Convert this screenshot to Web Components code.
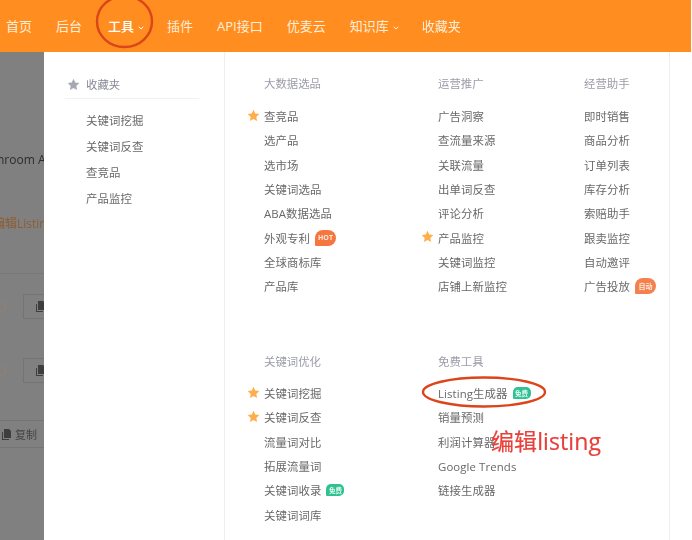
<!DOCTYPE html>
<html lang="zh">
<head>
<meta charset="utf-8">
<title>工具菜单</title>
<style>
  html, body { margin: 0; height: 100%; background: #fff; overflow: hidden; }
  body { font-family: "Open Sans", "Noto Sans CJK SC", sans-serif; }
</style>
</head>
<body>
<app-shell>
  <app-nav slot="nav">
    <nav-item>首页</nav-item>
    <nav-item>后台</nav-item>
    <nav-item active caret>工具</nav-item>
    <nav-item>插件</nav-item>
    <nav-item>API接口</nav-item>
    <nav-item>优麦云</nav-item>
    <nav-item caret>知识库</nav-item>
    <nav-item>收藏夹</nav-item>
  </app-nav>
  <dim-page slot="page"></dim-page>
  <fav-menu slot="side">
    <menu-link>关键词挖掘</menu-link>
    <menu-link>关键词反查</menu-link>
    <menu-link>查竞品</menu-link>
    <menu-link>产品监控</menu-link>
  </fav-menu>
  <tool-grid slot="main">
    <menu-group title="大数据选品" style="--w:174px;--gap:11px">
      <menu-link star>查竞品</menu-link>
      <menu-link>选产品</menu-link>
      <menu-link>选市场</menu-link>
      <menu-link>关键词选品</menu-link>
      <menu-link>ABA数据选品</menu-link>
      <menu-link badge="hot">外观专利</menu-link>
      <menu-link>全球商标库</menu-link>
      <menu-link>产品库</menu-link>
    </menu-group>
    <menu-group title="运营推广" style="--w:146px;--gap:11px">
      <menu-link>广告洞察</menu-link>
      <menu-link>查流量来源</menu-link>
      <menu-link>关联流量</menu-link>
      <menu-link>出单词反查</menu-link>
      <menu-link>评论分析</menu-link>
      <menu-link star>产品监控</menu-link>
      <menu-link>关键词监控</menu-link>
      <menu-link>店铺上新监控</menu-link>
    </menu-group>
    <menu-group title="经营助手" style="--w:84px;--gap:11px">
      <menu-link>即时销售</menu-link>
      <menu-link>商品分析</menu-link>
      <menu-link>订单列表</menu-link>
      <menu-link>库存分析</menu-link>
      <menu-link>索赔助手</menu-link>
      <menu-link>跟卖监控</menu-link>
      <menu-link>自动邀评</menu-link>
      <menu-link badge="auto">广告投放</menu-link>
    </menu-group>
    <menu-group title="关键词优化" style="--w:174px">
      <menu-link star>关键词挖掘</menu-link>
      <menu-link star>关键词反查</menu-link>
      <menu-link>流量词对比</menu-link>
      <menu-link>拓展流量词</menu-link>
      <menu-link badge="free">关键词收录</menu-link>
      <menu-link>关键词词库</menu-link>
    </menu-group>
    <menu-group title="免费工具" style="--w:146px">
      <menu-link badge="free">Listing生成器</menu-link>
      <menu-link>销量预测</menu-link>
      <menu-link>利润计算器</menu-link>
      <menu-link>Google Trends</menu-link>
      <menu-link>链接生成器</menu-link>
    </menu-group>
  </tool-grid>
  <red-notes slot="notes"></red-notes>
</app-shell>

<script>
const STAR = `<svg viewBox="0 0 24 24" width="13" height="13"><path fill="currentColor" d="M12 1.6l3.2 6.9 7.5.9-5.5 5.2 1.4 7.5L12 18.5l-6.6 3.6 1.4-7.5L1.3 9.4l7.5-.9z"/></svg>`;

class AppShell extends HTMLElement {
  constructor() {
    super();
    this.attachShadow({ mode: "open" }).innerHTML = `
    <style>
      :host { display: block; position: relative; width: 692px; height: 540px; overflow: hidden; filter: blur(.45px); }
      .body { display: flex; height: 488px; }
      .page { width: 44px; flex: none; overflow: hidden; background: #808080; }
      .panel { display: flex; width: 626px; flex: none; background: #fff; border-right: 1px solid #eeeeee; box-sizing: border-box; }
      .side { width: 181px; flex: none; border-right: 1px solid #efefef; box-sizing: border-box; }
      .main { flex: 1; min-width: 0; }
    </style>
    <slot name="nav"></slot>
    <div class="body">
      <div class="page"><slot name="page"></slot></div>
      <div class="panel">
        <div class="side"><slot name="side"></slot></div>
        <div class="main"><slot name="main"></slot></div>
      </div>
    </div>
    <slot name="notes"></slot>`;
  }
}

class AppNav extends HTMLElement {
  constructor() {
    super();
    this.attachShadow({ mode: "open" }).innerHTML = `
    <style>
      :host { display: flex; align-items: center; gap: 24px; width: 691px; height: 52px; padding-left: 6px; background: #ff8d1f; box-sizing: border-box; }
    </style>
    <slot></slot>`;
  }
}

class NavItem extends HTMLElement {
  constructor() {
    super();
    this.attachShadow({ mode: "open" }).innerHTML = `
    <style>
      :host { display: inline-flex; align-items: center; color: #ffeeda; font-size: 13px; line-height: 20px; white-space: nowrap; }
      :host([active]) { margin-left: 2px; color: #fff; font-weight: 500; }
      svg { display: none; margin: 3px -1px 0 4px; }
      :host([caret]) svg { display: block; }
    </style>
    <slot></slot>
    <svg width="6" height="4" viewBox="0 0 6 4"><path d="M.7.7L3 3l2.3-2.3" fill="none" stroke="currentColor" stroke-width="1"/></svg>`;
  }
}

class DimPage extends HTMLElement {
  constructor() {
    super();
    const copy = `<svg width="9" height="11" viewBox="0 0 9 11"><path fill="#3e3e3e" d="M2 0h5l2 2v7H2z"/><path fill="#3e3e3e" d="M0 3h1v7h6v1H0z"/></svg>`;
    this.attachShadow({ mode: "open" }).innerHTML = `
    <style>
      :host { display: block; height: 488px; color: #2c2c2c; font-size: 12px; }
      .row { overflow: hidden; white-space: nowrap; }
      .title { margin-left: -3px; padding-top: 100px; line-height: 16px; }
      .edit { padding-top: 48px; line-height: 16px; color: #8f5c30; margin-left: -7px; }
      .rule { height: 1px; margin-top: 41px; background: #787878; }
      .tool { display: flex; align-items: center; gap: 17px; height: 26px; box-sizing: border-box; }
      .help { width: 9px; height: 9px; margin-left: -5px; border: 1px solid #98806e; border-radius: 50%; flex: none; }
      .box { display: flex; align-items: center; width: 40px; height: 25px; padding-left: 12px; border: 1px solid #747474; flex: none; box-sizing: border-box; }
      .t1 { margin-top: 19px; }
      .t2 { margin-top: 38px; }
      .copy { display: flex; align-items: center; gap: 4px; height: 26px; margin-top: 37px; border-top: 1px solid #757575; border-bottom: 1px solid #757575; color: #444; font-size: 11px; padding-left: 2px; }
    </style>
    <div class="row title">nroom A</div>
    <div class="row edit">编辑Listing</div>
    <div class="rule"></div>
    <div class="tool t1"><span class="help"></span><span class="box">${copy}</span></div>
    <div class="tool t2"><span class="help"></span><span class="box">${copy}</span></div>
    <div class="row copy">${copy}<span>复制</span></div>`;
  }
}

class FavMenu extends HTMLElement {
  constructor() {
    super();
    this.attachShadow({ mode: "open" }).innerHTML = `
    <style>
      :host { display: block; padding: 20px 25px 0 21px; }
      header { display: flex; align-items: center; gap: 6px; height: 24px; padding: 0 0 2px 2px; margin-bottom: 8px; border-bottom: 1px solid #f1f1f1; color: #888a96; font-size: 11.4px; }
      svg { color: #a5a8b5; }
      .list { display: flex; flex-direction: column; padding-left: 21px; }
      ::slotted(menu-link) { height: 26px; }
    </style>
    <header>${STAR}<span>收藏夹</span></header>
    <div class="list"><slot></slot></div>`;
  }
}

class ToolGrid extends HTMLElement {
  constructor() {
    super();
    this.attachShadow({ mode: "open" }).innerHTML = `
    <style>
      :host { display: flex; flex-wrap: wrap; align-content: flex-start; row-gap: 36px; padding: 23px 0 0 39px; box-sizing: border-box; height: 488px; overflow: hidden; }
    </style>
    <slot></slot>`;
  }
}

class MenuGroup extends HTMLElement {
  constructor() {
    super();
    this.attachShadow({ mode: "open" }).innerHTML = `
    <style>
      :host { display: block; flex: none; width: var(--w); height: 242px; }
      h3 { margin: 0 0 var(--gap, 10px); height: 18px; font: inherit; font-size: 11.4px; line-height: 18px; color: #9b9ca8; white-space: nowrap; }
      .list { display: flex; flex-direction: column; }
    </style>
    <h3></h3>
    <div class="list"><slot></slot></div>`;
    this.shadowRoot.querySelector("h3").textContent = this.getAttribute("title");
    this.removeAttribute("title");
  }
}

class MenuLink extends HTMLElement {
  constructor() {
    super();
    const badges = { hot: "HOT", auto: "自动", free: "免费" };
    const type = this.getAttribute("badge");
    this.attachShadow({ mode: "open" }).innerHTML = `
    <style>
      :host { display: flex; align-items: center; position: relative; height: 24.3px; color: #686868; font-size: 11.4px; letter-spacing: .1px; white-space: nowrap; }
      .star { position: absolute; left: -17.5px; top: calc(50% - 7.5px); color: #ffae4c; }
      .star svg { display: block; }
      .badge { display: inline-flex; align-items: center; justify-content: center; margin-left: 5px; height: 15px; padding: 0 3px; border-radius: 8px 8px 8px 1px; background: #f5763f; color: #ffe9dd; font-size: 7px; font-weight: 700; letter-spacing: 0; }
      .hot { width: 21px; height: 16px; padding: 0; box-sizing: border-box; }
      .auto { width: 21px; height: 16px; padding: 0; background: #f4814d; box-sizing: border-box; }
      .free { width: 18px; height: 12px; padding: 0; border-radius: 5px 5px 5px 1px; background: #2fc191; color: #e7fbf3; font-size: 6.5px; }
    </style>
    ${this.hasAttribute("star") ? `<span class="star">${STAR}</span>` : ""}
    <slot></slot>
    ${type ? `<span class="badge ${type}">${badges[type]}</span>` : ""}`;
  }
}

class RedNotes extends HTMLElement {
  constructor() {
    super();
    this.attachShadow({ mode: "open" }).innerHTML = `
    <style>
      :host { display: block; position: absolute; inset: 0; pointer-events: none; }
      svg { position: absolute; left: 0; top: 0; }
      span { position: absolute; left: 491px; top: 424px; color: #e8403a; font-size: 23px; line-height: 34px; letter-spacing: .1px; -webkit-text-stroke: .2px #e8403a; white-space: nowrap; }
    </style>
    <svg width="692" height="540" fill="none" stroke="#dc4419" stroke-width="2.4">
      <ellipse cx="124.5" cy="21.5" rx="27.5" ry="25.5"/>
      <ellipse cx="484" cy="392" rx="61" ry="14.5"/>
    </svg>
    <span>编辑listing</span>`;
  }
}

customElements.define("app-shell", AppShell);
customElements.define("app-nav", AppNav);
customElements.define("nav-item", NavItem);
customElements.define("dim-page", DimPage);
customElements.define("fav-menu", FavMenu);
customElements.define("tool-grid", ToolGrid);
customElements.define("menu-group", MenuGroup);
customElements.define("menu-link", MenuLink);
customElements.define("red-notes", RedNotes);
</script>
</body>
</html>
